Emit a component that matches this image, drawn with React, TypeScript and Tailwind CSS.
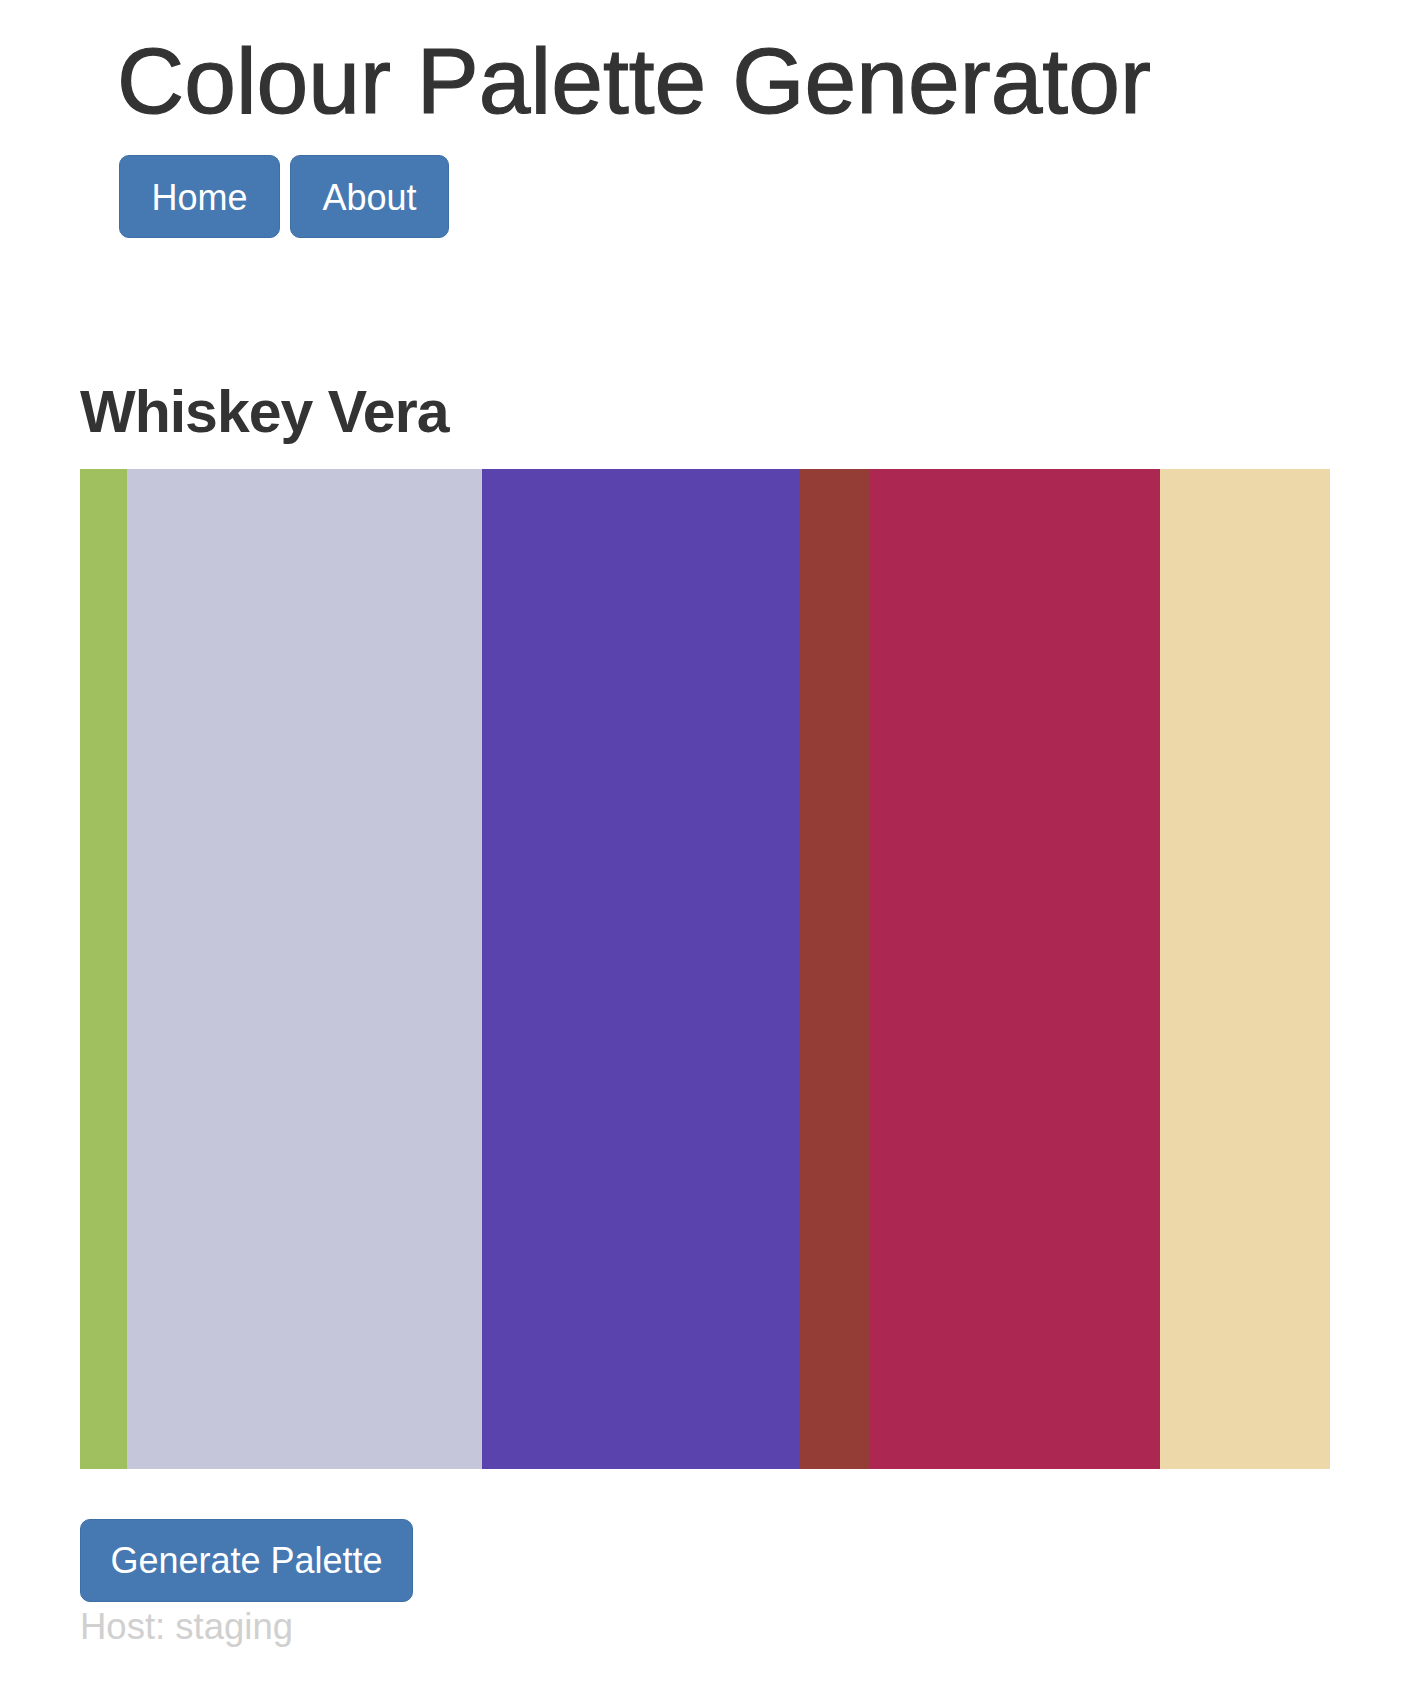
import React from "react";

const swatches = [
  { w: 47, c: "#a0c05f" },
  { w: 355, c: "#c5c6da" },
  { w: 318, c: "#5a43ad" },
  { w: 70, c: "#943d36" },
  { w: 290, c: "#ac2752" },
  { w: 170, c: "#edd8aa" },
];

export default function App() {
  return (
    <div className="min-h-[1702px] bg-white font-['Liberation_Sans',Arial,sans-serif] text-[#333]">
      <header className="pl-[117px] pt-[30px]">
        <h1 className="m-0 h-[102px] text-[93px] font-normal leading-[102px] text-[#333] [-webkit-text-stroke:1.2px_#333]">
          Colour Palette Generator
        </h1>
        <nav className="ml-[2px] mt-[23px] flex gap-[10px]">
          <button className="flex h-[83px] w-[161px] items-center justify-center rounded-[10px] border border-[#3e6ea5] bg-[#4679b2] pt-[2px] text-[36px] leading-none text-white">
            Home
          </button>
          <button className="flex h-[83px] w-[159px] items-center justify-center rounded-[10px] border border-[#3e6ea5] bg-[#4679b2] pt-[2px] text-[36px] leading-none text-white">
            About
          </button>
        </nav>
      </header>
      <main className="px-[80px]">
        <h2 className="m-0 mt-[142px] mb-[24px] text-[59px] font-bold leading-[1.1] tracking-[-1px] text-[#333]">
          Whiskey Vera
        </h2>
        <div className="flex h-[1000px] w-[1250px]">
          {swatches.map((s, i) => (
            <div key={i} className="h-full shrink-0" style={{ width: s.w, backgroundColor: s.c }} />
          ))}
        </div>
        <button className="mt-[50px] flex h-[83px] w-[333px] items-center justify-center rounded-[10px] border border-[#3e6ea5] bg-[#4679b2] pt-[2px] text-[36px] leading-none text-white">
          Generate Palette
        </button>
        <p className="m-0 mt-[5px] text-[36.5px] leading-[40px] text-[#d0d0d0]">Host: staging</p>
      </main>
    </div>
  );
}
